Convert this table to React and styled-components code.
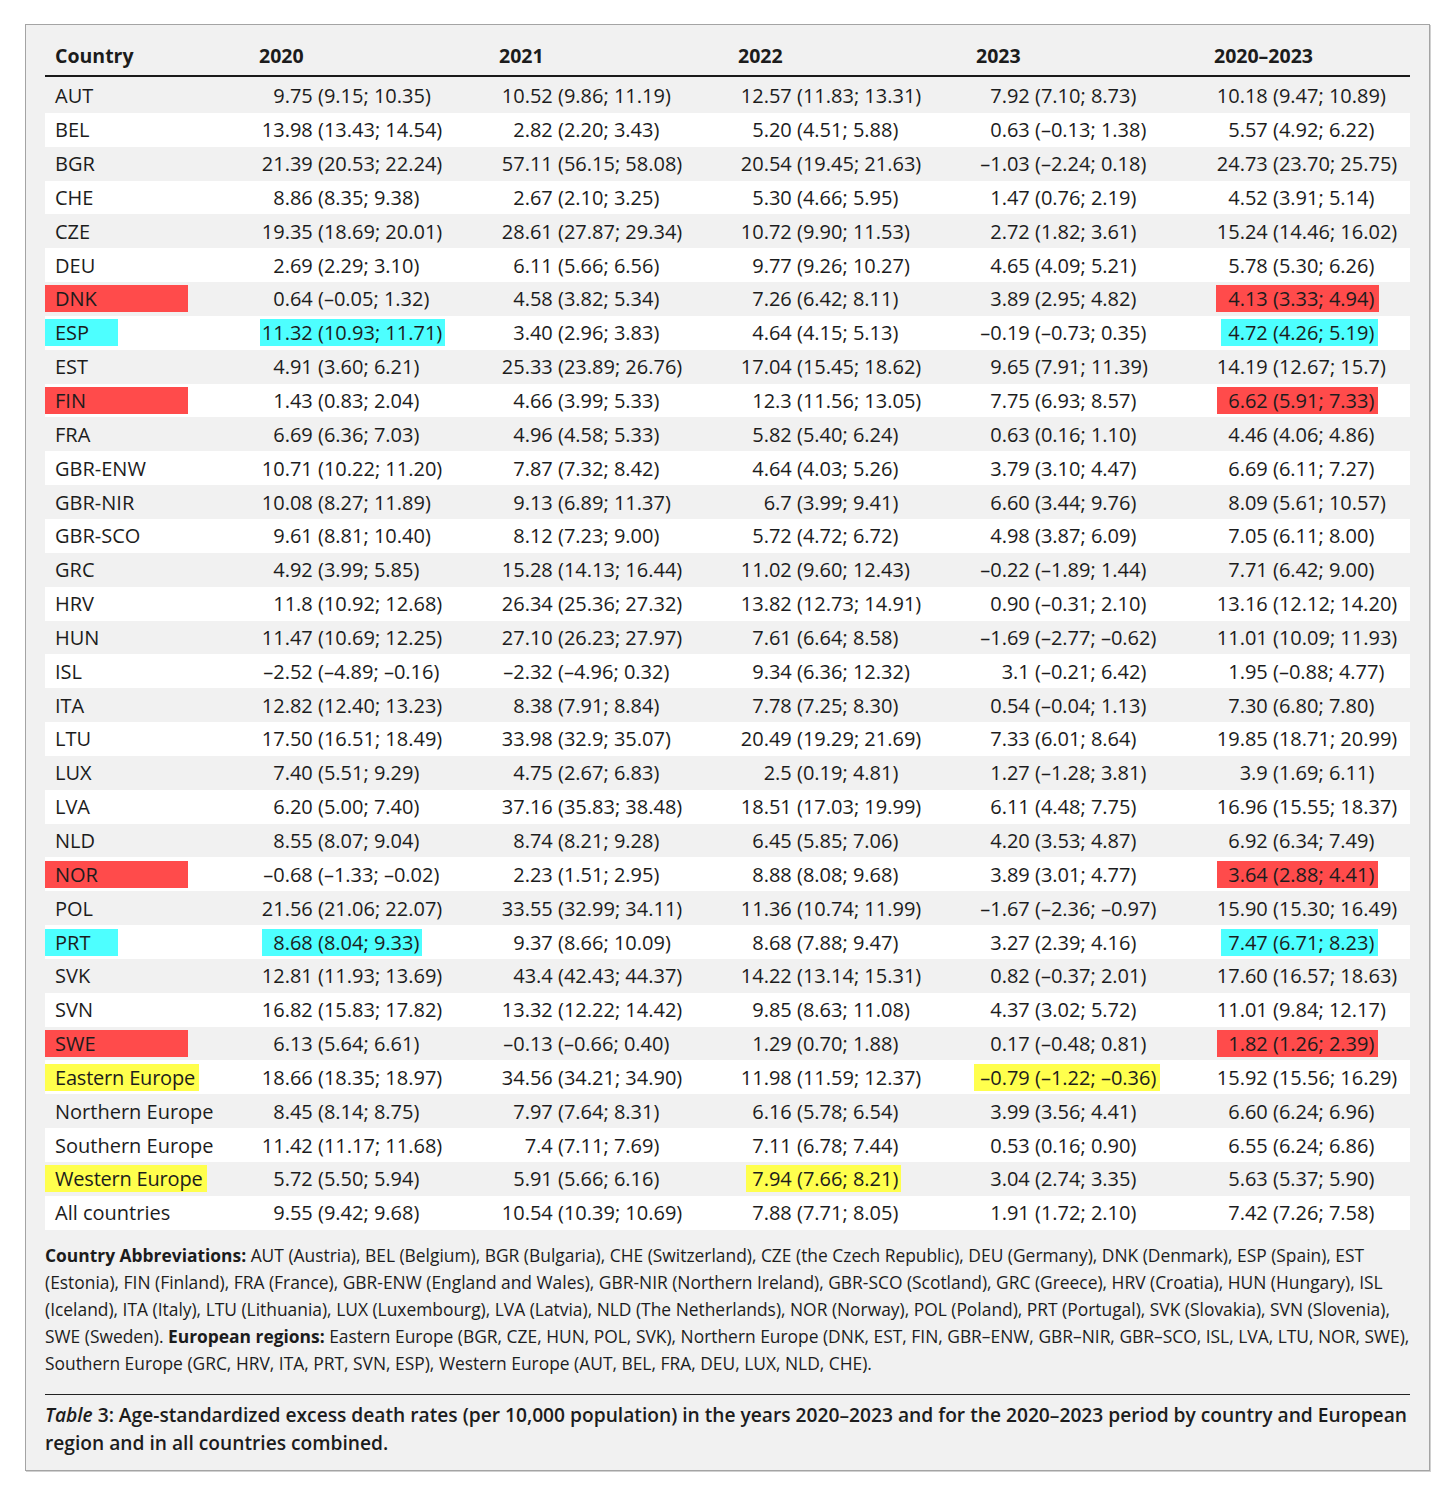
import React from 'react';
import styled, { createGlobalStyle } from 'styled-components';

const Global = createGlobalStyle`
  html, body { margin: 0; padding: 0; background: #ffffff; }
  body { font-family: 'Open Sans', 'Noto Sans', sans-serif; color: #1c1c1c; }
`;

const COLORS = { red: '#ff4b4b', cyan: '#4dffff', yellow: '#ffff4d' };
const COLS = '204px 240px 239px 238px 238px 1fr';

const Page = styled.div`
  width: 1456px;
  box-sizing: border-box;
  padding: 24px 0 30px 25px;
`;

const Panel = styled.section`
  width: 1405px;
  box-sizing: border-box;
  background: #f1f1f1;
  border: 1px solid #a4a4a4;
  box-shadow: 1px 1px 0 #d0d0d0;
  padding: 0 19px 13px 19px;
`;

const HeadRow = styled.div`
  display: grid;
  grid-template-columns: ${COLS};
  height: 52px;
  box-sizing: border-box;
  padding-top: 21px;
  border-bottom: 2px solid #1a1a1a;
`;

const HeadCell = styled.div`
  padding-left: 10px;
  font-size: 19.5px;
  font-weight: 700;
  line-height: 1;
  white-space: nowrap;
`;

const Body = styled.div`
  margin-top: 2px;
`;

const Row = styled.div`
  display: grid;
  grid-template-columns: ${COLS};
  height: 33.85px;
  align-items: center;
  background: ${(p) => (p.$alt ? '#ffffff' : 'transparent')};
`;

const Cell = styled.div`
  padding-left: 10px;
  font-size: 20px;
  line-height: 27px;
  white-space: nowrap;
`;

const Tag = styled.span`
  display: inline-block;
  box-sizing: border-box;
  height: 27px;
  margin-left: -10px;
  padding-left: 10px;
  padding-right: ${(p) => p.$pr || 0}px;
  width: ${(p) => (p.$w ? `${p.$w}px` : 'auto')};
  letter-spacing: ${(p) => (p.$tight ? '-0.2px' : 'normal')};
  background: ${(p) => (p.$hl ? COLORS[p.$hl] : 'transparent')};
`;

const Val = styled.span`
  display: inline-block;
  height: 27px;
  margin-left: ${(p) => p.$o || 0}px;
  padding-right: ${(p) => p.$pr || 0}px;
  background: ${(p) => (p.$hl ? COLORS[p.$hl] : 'transparent')};
`;

const Num = styled.span`
  display: inline-block;
  width: ${(p) => p.$w}px;
  text-align: right;
`;

const Notes = styled.p`
  margin: 0;
  padding-top: 12.5px;
  font-family: 'Open Sans', 'Noto Sans', sans-serif;
  font-size: 17.4px;
  line-height: 27px;
  white-space: nowrap;
  b { font-weight: 700; }
`;

const Rule = styled.div`
  margin-top: 16.5px;
  height: 1px;
  background: #222222;
`;

const Caption = styled.p`
  margin: 6px 0 0;
  font-family: 'Open Sans', 'Noto Sans', sans-serif;
  font-size: 19.2px;
  font-weight: 600;
  line-height: 28px;
  white-space: nowrap;
`;

const HEAD = ['Country', '2020', '2021', '2022', '2023', '2020–2023'];

const h = (v, hl, o, pr = 4) => ({ v, hl, o, pr });

const ROWS = [
  ['AUT', '9.75 (9.15; 10.35)', '10.52 (9.86; 11.19)', '12.57 (11.83; 13.31)', '7.92 (7.10; 8.73)', '10.18 (9.47; 10.89)'],
  ['BEL', '13.98 (13.43; 14.54)', '2.82 (2.20; 3.43)', '5.20 (4.51; 5.88)', '0.63 (–0.13; 1.38)', '5.57 (4.92; 6.22)'],
  ['BGR', '21.39 (20.53; 22.24)', '57.11 (56.15; 58.08)', '20.54 (19.45; 21.63)', '–1.03 (–2.24; 0.18)', '24.73 (23.70; 25.75)'],
  ['CHE', '8.86 (8.35; 9.38)', '2.67 (2.10; 3.25)', '5.30 (4.66; 5.95)', '1.47 (0.76; 2.19)', '4.52 (3.91; 5.14)'],
  ['CZE', '19.35 (18.69; 20.01)', '28.61 (27.87; 29.34)', '10.72 (9.90; 11.53)', '2.72 (1.82; 3.61)', '15.24 (14.46; 16.02)'],
  ['DEU', '2.69 (2.29; 3.10)', '6.11 (5.66; 6.56)', '9.77 (9.26; 10.27)', '4.65 (4.09; 5.21)', '5.78 (5.30; 6.26)'],
  [{ v: 'DNK', hl: 'red', w: 143 }, '0.64 (–0.05; 1.32)', '4.58 (3.82; 5.34)', '7.26 (6.42; 8.11)', '3.89 (2.95; 4.82)', h('4.13 (3.33; 4.94)', 'red', 2, 5)],
  [{ v: 'ESP', hl: 'cyan', w: 73 }, h('11.32 (10.93; 11.71)', 'cyan', 1, 3), '3.40 (2.96; 3.83)', '4.64 (4.15; 5.13)', '–0.19 (–0.73; 0.35)', h('4.72 (4.26; 5.19)', 'cyan', 7, 4)],
  ['EST', '4.91 (3.60; 6.21)', '25.33 (23.89; 26.76)', '17.04 (15.45; 18.62)', '9.65 (7.91; 11.39)', '14.19 (12.67; 15.7)'],
  [{ v: 'FIN', hl: 'red', w: 143 }, '1.43 (0.83; 2.04)', '4.66 (3.99; 5.33)', '12.3 (11.56; 13.05)', '7.75 (6.93; 8.57)', h('6.62 (5.91; 7.33)', 'red', 3, 4)],
  ['FRA', '6.69 (6.36; 7.03)', '4.96 (4.58; 5.33)', '5.82 (5.40; 6.24)', '0.63 (0.16; 1.10)', '4.46 (4.06; 4.86)'],
  ['GBR-ENW', '10.71 (10.22; 11.20)', '7.87 (7.32; 8.42)', '4.64 (4.03; 5.26)', '3.79 (3.10; 4.47)', '6.69 (6.11; 7.27)'],
  ['GBR-NIR', '10.08 (8.27; 11.89)', '9.13 (6.89; 11.37)', '6.7 (3.99; 9.41)', '6.60 (3.44; 9.76)', '8.09 (5.61; 10.57)'],
  ['GBR-SCO', '9.61 (8.81; 10.40)', '8.12 (7.23; 9.00)', '5.72 (4.72; 6.72)', '4.98 (3.87; 6.09)', '7.05 (6.11; 8.00)'],
  ['GRC', '4.92 (3.99; 5.85)', '15.28 (14.13; 16.44)', '11.02 (9.60; 12.43)', '–0.22 (–1.89; 1.44)', '7.71 (6.42; 9.00)'],
  ['HRV', '11.8 (10.92; 12.68)', '26.34 (25.36; 27.32)', '13.82 (12.73; 14.91)', '0.90 (–0.31; 2.10)', '13.16 (12.12; 14.20)'],
  ['HUN', '11.47 (10.69; 12.25)', '27.10 (26.23; 27.97)', '7.61 (6.64; 8.58)', '–1.69 (–2.77; –0.62)', '11.01 (10.09; 11.93)'],
  ['ISL', '–2.52 (–4.89; –0.16)', '–2.32 (–4.96; 0.32)', '9.34 (6.36; 12.32)', '3.1 (–0.21; 6.42)', '1.95 (–0.88; 4.77)'],
  ['ITA', '12.82 (12.40; 13.23)', '8.38 (7.91; 8.84)', '7.78 (7.25; 8.30)', '0.54 (–0.04; 1.13)', '7.30 (6.80; 7.80)'],
  ['LTU', '17.50 (16.51; 18.49)', '33.98 (32.9; 35.07)', '20.49 (19.29; 21.69)', '7.33 (6.01; 8.64)', '19.85 (18.71; 20.99)'],
  ['LUX', '7.40 (5.51; 9.29)', '4.75 (2.67; 6.83)', '2.5 (0.19; 4.81)', '1.27 (–1.28; 3.81)', '3.9 (1.69; 6.11)'],
  ['LVA', '6.20 (5.00; 7.40)', '37.16 (35.83; 38.48)', '18.51 (17.03; 19.99)', '6.11 (4.48; 7.75)', '16.96 (15.55; 18.37)'],
  ['NLD', '8.55 (8.07; 9.04)', '8.74 (8.21; 9.28)', '6.45 (5.85; 7.06)', '4.20 (3.53; 4.87)', '6.92 (6.34; 7.49)'],
  [{ v: 'NOR', hl: 'red', w: 143 }, '–0.68 (–1.33; –0.02)', '2.23 (1.51; 2.95)', '8.88 (8.08; 9.68)', '3.89 (3.01; 4.77)', h('3.64 (2.88; 4.41)', 'red', 3, 4)],
  ['POL', '21.56 (21.06; 22.07)', '33.55 (32.99; 34.11)', '11.36 (10.74; 11.99)', '–1.67 (–2.36; –0.97)', '15.90 (15.30; 16.49)'],
  [{ v: 'PRT', hl: 'cyan', w: 73 }, h('8.68 (8.04; 9.33)', 'cyan', 3, 3), '9.37 (8.66; 10.09)', '8.68 (7.88; 9.47)', '3.27 (2.39; 4.16)', h('7.47 (6.71; 8.23)', 'cyan', 7, 4)],
  ['SVK', '12.81 (11.93; 13.69)', '43.4 (42.43; 44.37)', '14.22 (13.14; 15.31)', '0.82 (–0.37; 2.01)', '17.60 (16.57; 18.63)'],
  ['SVN', '16.82 (15.83; 17.82)', '13.32 (12.22; 14.42)', '9.85 (8.63; 11.08)', '4.37 (3.02; 5.72)', '11.01 (9.84; 12.17)'],
  [{ v: 'SWE', hl: 'red', w: 143 }, '6.13 (5.64; 6.61)', '–0.13 (–0.66; 0.40)', '1.29 (0.70; 1.88)', '0.17 (–0.48; 0.81)', h('1.82 (1.26; 2.39)', 'red', 3, 4)],
  [{ v: 'Eastern Europe', hl: 'yellow', pr: 4, tight: true }, '18.66 (18.35; 18.97)', '34.56 (34.21; 34.90)', '11.98 (11.59; 12.37)', h('–0.79 (–1.22; –0.36)', 'yellow', -2.5, 4), '15.92 (15.56; 16.29)'],
  ['Northern Europe', '8.45 (8.14; 8.75)', '7.97 (7.64; 8.31)', '6.16 (5.78; 6.54)', '3.99 (3.56; 4.41)', '6.60 (6.24; 6.96)'],
  ['Southern Europe', '11.42 (11.17; 11.68)', '7.4 (7.11; 7.69)', '7.11 (6.78; 7.44)', '0.53 (0.16; 0.90)', '6.55 (6.24; 6.86)'],
  [{ v: 'Western Europe', hl: 'yellow', pr: 5, tight: true }, '5.72 (5.50; 5.94)', '5.91 (5.66; 6.16)', h('7.94 (7.66; 8.21)', 'yellow', 8.4, 3), '3.04 (2.74; 3.35)', '5.63 (5.37; 5.90)'],
  ['All countries', '9.55 (9.42; 9.68)', '10.54 (10.39; 10.69)', '7.88 (7.71; 8.05)', '1.91 (1.72; 2.10)', '7.42 (7.26; 7.58)'],
];

const NUM_W = 53.8;

function Value({ cell }) {
  const c = typeof cell === 'string' ? { v: cell } : cell;
  const i = c.v.indexOf(' ');
  const num = c.v.slice(0, i);
  const ci = c.v.slice(i + 1);
  const o = c.hl ? c.o || 0 : 0;
  return (
    <Cell>
      <Val $hl={c.hl} $o={o} $pr={c.hl ? c.pr : 0}>
        <Num $w={NUM_W - o}>{num}</Num> {ci}
      </Val>
    </Cell>
  );
}

function Country({ cell }) {
  const c = typeof cell === 'string' ? { v: cell } : cell;
  return (
    <Cell>
      <Tag $hl={c.hl} $w={c.w} $pr={c.pr} $tight={c.tight}>{c.v}</Tag>
    </Cell>
  );
}

export default function App() {
  return (
    <Page>
      <Global />
      <Panel>
        <HeadRow>
          {HEAD.map((t) => (
            <HeadCell key={t}>{t}</HeadCell>
          ))}
        </HeadRow>
        <Body>
          {ROWS.map((r, idx) => (
            <Row key={idx} $alt={idx % 2 === 1}>
              <Country cell={r[0]} />
              {r.slice(1).map((c, j) => (
                <Value key={j} cell={c} />
              ))}
            </Row>
          ))}
        </Body>
        <Notes>
          <b>Country Abbreviations:</b> AUT (Austria), BEL (Belgium), BGR (Bulgaria), CHE (Switzerland), CZE (the Czech Republic), DEU (Germany), DNK (Denmark), ESP (Spain), EST
          <br />
          (Estonia), FIN (Finland), FRA (France), GBR-ENW (England and Wales), GBR-NIR (Northern Ireland), GBR-SCO (Scotland), GRC (Greece), HRV (Croatia), HUN (Hungary), ISL
          <br />
          (Iceland), ITA (Italy), LTU (Lithuania), LUX (Luxembourg), LVA (Latvia), NLD (The Netherlands), NOR (Norway), POL (Poland), PRT (Portugal), SVK (Slovakia), SVN (Slovenia),
          <br />
          SWE (Sweden). <b>European regions:</b> Eastern Europe (BGR, CZE, HUN, POL, SVK), Northern Europe (DNK, EST, FIN, GBR–ENW, GBR–NIR, GBR–SCO, ISL, LVA, LTU, NOR, SWE),
          <br />
          Southern Europe (GRC, HRV, ITA, PRT, SVN, ESP), Western Europe (AUT, BEL, FRA, DEU, LUX, NLD, CHE).
        </Notes>
        <Rule />
        <Caption>
          <i>Table</i> 3: Age-standardized excess death rates (per 10,000 population) in the years 2020–2023 and for the 2020–2023 period by country and European
          <br />
          region and in all countries combined.
        </Caption>
      </Panel>
    </Page>
  );
}
